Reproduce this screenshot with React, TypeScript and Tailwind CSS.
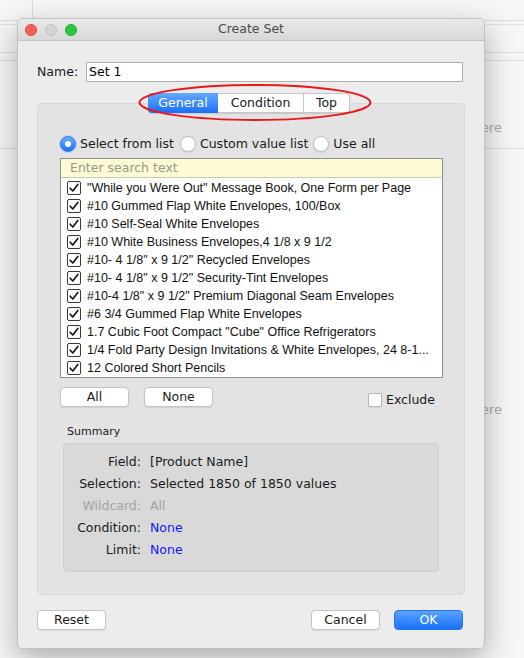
import React from 'react';

const ui = { fontFamily: '"DejaVu Sans", "Liberation Sans", sans-serif' };
const listFont = { fontFamily: '"Liberation Sans", Arial, sans-serif' };

const items = [
  '"While you Were Out" Message Book, One Form per Page',
  '#10 Gummed Flap White Envelopes, 100/Box',
  '#10 Self-Seal White Envelopes',
  '#10 White Business Envelopes,4 1/8 x 9 1/2',
  '#10- 4 1/8" x 9 1/2" Recycled Envelopes',
  '#10- 4 1/8" x 9 1/2" Security-Tint Envelopes',
  '#10-4 1/8" x 9 1/2" Premium Diagonal Seam Envelopes',
  '#6 3/4 Gummed Flap White Envelopes',
  '1.7 Cubic Foot Compact "Cube" Office Refrigerators',
  '1/4 Fold Party Design Invitations & White Envelopes, 24 8-1...',
  '12 Colored Short Pencils',
];

const summary = [
  { label: 'Field:', value: '[Product Name]', tone: 'normal' },
  { label: 'Selection:', value: 'Selected 1850 of 1850 values', tone: 'normal' },
  { label: 'Wildcard:', value: 'All', tone: 'muted' },
  { label: 'Condition:', value: 'None', tone: 'link' },
  { label: 'Limit:', value: 'None', tone: 'link' },
];

const CheckBox: React.FC<{ checked?: boolean }> = ({ checked }) => (
  <div
    className={`w-[14px] h-[14px] shrink-0 rounded-[2px] bg-white flex items-center justify-center ${
      checked ? 'border border-[#3a3a3a]' : 'border border-[#b8b8b8] shadow-[0_1px_1px_rgba(0,0,0,0.06)]'
    }`}
  >
    {checked && (
      <svg width="12" height="12" viewBox="0 0 12 12">
        <path d="M2.2 6.2 L4.8 9 L9.8 2.4" fill="none" stroke="#111" strokeWidth="1.6" strokeLinecap="round" strokeLinejoin="round" />
      </svg>
    )}
  </div>
);

const Radio: React.FC<{ on?: boolean }> = ({ on }) =>
  on ? (
    <div className="w-[16px] h-[16px] shrink-0 rounded-full bg-gradient-to-b from-[#6aaeff] to-[#1b6ef6] border border-[#2f78ea] flex items-center justify-center shadow-[0_0_0_1px_rgba(60,130,250,0.25)]">
      <div className="w-[6px] h-[6px] rounded-full bg-white" />
    </div>
  ) : (
    <div className="w-[16px] h-[16px] shrink-0 rounded-full bg-white border border-[#bdbdbd] shadow-[0_1px_1px_rgba(0,0,0,0.08)]" />
  );

const Btn: React.FC<{ children: React.ReactNode; primary?: boolean }> = ({ children, primary }) => (
  <div
    className={`w-[69px] h-[20px] rounded-[4px] flex items-center justify-center text-[12.5px] ${
      primary
        ? 'bg-gradient-to-b from-[#58a2ff] to-[#1670fa] text-white border border-[#2d74e8]'
        : 'bg-white text-[#1a1a1a] border border-[#c4c4c4] shadow-[0_1px_1px_rgba(0,0,0,0.08)]'
    }`}
  >
    {children}
  </div>
);

const App: React.FC = () => {
  return (
    <div className="relative w-[524px] h-[658px] overflow-hidden bg-[#f6f6f6]" style={ui}>
      {/* app behind the sheet */}
      <div className="h-[21px] border-b border-[#dcdcdc]">
        <div className="w-[33px] h-full border-r border-[#dcdcdc]" />
      </div>
      <div className="h-[4px] border-b border-[#e2e2e2]" />
      <div className="h-[28px] border-b border-[#dedede]" />
      <div className="h-[8px] border-b border-[#dcdcdc]" />
      <div className="h-[88px] border-b border-[#dcdcdc] flex items-start justify-end pr-[22px] pt-[59px]">
        <span className="text-[13px] leading-[16px] text-[#ababab]">here</span>
      </div>
      <div className="h-[269px] flex items-end justify-end pr-[22px]">
        <span className="text-[13px] leading-[16px] text-[#ababab]">here</span>
      </div>

      {/* dialog window */}
      <div className="absolute left-[17px] top-[18px] w-[468px] h-[631px] rounded-[5px] bg-[#ececec] border border-[#c2c2c2] shadow-[0_10px_30px_rgba(0,0,0,0.3)] overflow-hidden flex flex-col">
        <div className="relative h-[22px] shrink-0 bg-gradient-to-b from-[#e9e9e9] to-[#d8d8d8] border-b border-[#c6c6c6] flex items-center justify-center">
          <div className="absolute left-[7px] top-[5px] flex gap-[8px]">
            <div className="w-[12px] h-[12px] rounded-full bg-[#fc5f57] border border-[#df4741]" />
            <div className="w-[12px] h-[12px] rounded-full bg-[#d3d3d3] border border-[#c2c2c2]" />
            <div className="w-[12px] h-[12px] rounded-full bg-[#2ac83f] border border-[#1dad2b]" />
          </div>
          <span className="text-[12.5px] text-[#4a4a4a]">Create Set</span>
        </div>

        <div className="flex flex-col px-[19px] pt-[21px]">
          {/* name row */}
          <div className="flex items-center h-[20px]">
            <span className="w-[49px] text-[12.5px] text-[#1a1a1a]">Name:</span>
            <div className="w-[377px] h-[20px] bg-white border border-[#b0b0b0] flex items-center px-[2px] text-[12.5px] text-black">
              Set 1
            </div>
          </div>

          {/* tabs */}
          <div className="relative z-10 mt-[11px] h-[20px] flex justify-center pr-[4px]">
            <div className="flex h-[20px] rounded-[4px] shadow-[0_1px_1px_rgba(0,0,0,0.12)] text-[12.5px]">
              <div className="w-[70px] h-full rounded-l-[4px] bg-gradient-to-b from-[#62a8ff] to-[#1a6ef8] text-white flex items-center justify-center">
                General
              </div>
              <div className="w-[86px] h-full bg-white border-y border-[#c6c6c6] border-r flex items-center justify-center text-[#1a1a1a]">
                Condition
              </div>
              <div className="w-[46px] h-full bg-white border-y border-r border-[#c6c6c6] rounded-r-[4px] flex items-center justify-center text-[#1a1a1a]">
                Top
              </div>
            </div>
            <svg className="absolute left-[101px] top-[-10px]" width="234" height="39" viewBox="0 0 234 39">
              <ellipse cx="117" cy="19.5" rx="115.5" ry="17.5" fill="none" stroke="#e8191b" strokeWidth="2" />
            </svg>
          </div>

          {/* tab panel */}
          <div className="-mt-[10px] h-[492px] rounded-[5px] bg-[#e3e3e3] border border-[#d9d9d9] flex flex-col pt-[32px] pl-[22px] pr-[21px]">
            <div className="flex items-center h-[16px] text-[12.5px] text-[#1a1a1a]">
              <Radio on />
              <span className="ml-[4px]">Select from list</span>
              <div className="ml-[6px]"><Radio /></div>
              <span className="ml-[4px]">Custom value list</span>
              <div className="ml-[5px]"><Radio /></div>
              <span className="ml-[4px]">Use all</span>
            </div>

            <div className="mt-[6px] border border-[#8e8e8e] bg-white flex flex-col">
              <div className="h-[19px] bg-[#fcfbd6] border-b border-[#c9c9b4] flex items-center pl-[9px] text-[12.5px] text-[#999988]">
                Enter search text
              </div>
              <div className="pt-[1px] flex flex-col" style={listFont}>
                {items.map((it) => (
                  <div key={it} className="h-[18px] flex items-center pl-[6px] text-[12.5px] text-[#111] whitespace-nowrap overflow-hidden">
                    <CheckBox checked />
                    <span className="ml-[6px]">{it}</span>
                  </div>
                ))}
              </div>
            </div>

            <div className="mt-[9px] flex items-start">
              <Btn>All</Btn>
              <div className="ml-[15px]"><Btn>None</Btn></div>
              <div className="ml-auto mr-[8px] mt-[4px] flex items-center gap-[4px] text-[12.5px] text-[#1a1a1a]">
                <CheckBox />
                <span>Exclude</span>
              </div>
            </div>

            <div className="mt-[15px] pl-[7px] text-[11px] leading-[14px] text-[#1a1a1a]">Summary</div>

            <div className="mt-[4px] ml-[3px] mr-[4px] rounded-[4px] bg-[#d9d9d9] border border-[#d0d0d0] pt-[8px] pb-[9px] flex flex-col text-[12.5px]">
              {summary.map((r) => (
                <div key={r.label} className="h-[22px] flex items-center">
                  <span className={`w-[77px] text-right ${r.tone === 'muted' ? 'text-[#a3a3a3]' : 'text-[#1a1a1a]'}`}>
                    {r.label}
                  </span>
                  <span
                    className={`ml-[9px] ${
                      r.tone === 'muted' ? 'text-[#a3a3a3]' : r.tone === 'link' ? 'text-[#1515f5]' : 'text-[#1a1a1a]'
                    }`}
                  >
                    {r.value}
                  </span>
                </div>
              ))}
            </div>
          </div>

          {/* dialog buttons */}
          <div className="mt-[15px] flex items-center pr-[2px]">
            <Btn>Reset</Btn>
            <div className="ml-auto"><Btn>Cancel</Btn></div>
            <div className="ml-[14px]"><Btn primary>OK</Btn></div>
          </div>
        </div>
      </div>
    </div>
  );
};

export default App;
